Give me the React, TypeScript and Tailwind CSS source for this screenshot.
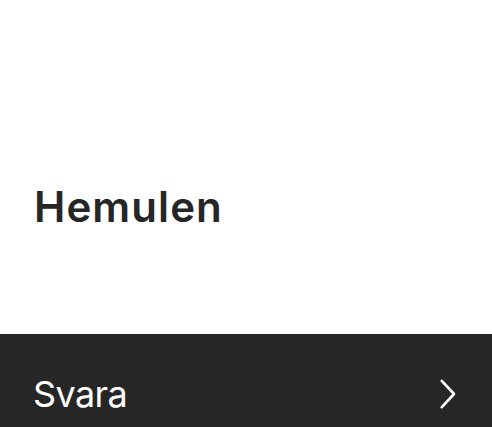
import React from "react";

const Chevron = () => (
  <svg width="16" height="30" viewBox="0 0 16 30" fill="none" className="mt-[3px] shrink-0">
    <polyline
      points="1.8,1.8 14,15 1.8,28.2"
      stroke="#ffffff"
      strokeWidth="2.6"
      strokeLinecap="round"
      strokeLinejoin="round"
    />
  </svg>
);

export default function App() {
  return (
    <div className="flex flex-col w-[492px] h-[427px] overflow-hidden bg-white font-['Inter','Liberation_Sans',sans-serif]">
      <div className="flex-1 pl-[34px] pt-[186px]">
        <h1 className="text-[42px] leading-none font-semibold text-[#262626] tracking-[1.1px]">
          Hemulen
        </h1>
      </div>
      <div className="h-[93px] bg-[#262626] flex items-start justify-between pl-[33px] pr-[36px] pt-[42px]">
        <span className="text-[36px] leading-none font-normal text-white tracking-[-0.6px]">Svara</span>
        <Chevron />
      </div>
    </div>
  );
}
